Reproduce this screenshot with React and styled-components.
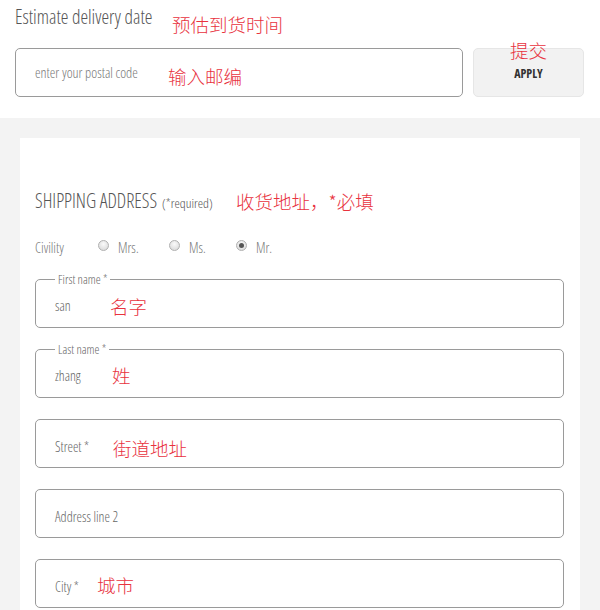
import styled, { createGlobalStyle } from "styled-components";

const GlobalStyle = createGlobalStyle`
  body {
    margin: 0;
    background: #ffffff;
    font-family: "Open Sans", "Lato", sans-serif;
    font-stretch: 80%;
    font-weight: 300;
  }
`;

const Page = styled.div`
  width: 600px;
  height: 610px;
  overflow: hidden;
  display: flex;
  flex-direction: column;
`;

const DeliverySection = styled.div`
  padding: 5px 16px 21px 15px;
  background: #fff;
`;

const Heading = styled.div`
  display: flex;
  align-items: flex-start;
  font-size: 19.3px;
  color: #555;
  line-height: 24px;
  height: 43px;
`;

const Slot = styled.span`
  flex: none;
  width: ${({ $w }) => $w}px;
  margin-top: ${({ $top }) => $top || 0}px;
  white-space: nowrap;
`;

const Note = styled.span`
  font-family: "Noto Sans CJK SC", sans-serif;
  font-stretch: normal;
  font-weight: 300;
  font-size: 18.5px;
  line-height: 24px;
  color: #e8323e;
  white-space: nowrap;
  margin-top: ${({ $top }) => $top || 0}px;
`;

const PostalRow = styled.div`
  display: flex;
  gap: 10px;
`;

const PostalInput = styled.div`
  flex: 1;
  height: 49px;
  box-sizing: border-box;
  border: 1px solid #9a9a9a;
  border-radius: 5px;
  display: flex;
  align-items: center;
  padding: 0 19px;
  font-size: 14.1px;
  color: #777;
`;

const ApplyButton = styled.div`
  position: relative;
  width: 111px;
  height: 49px;
  box-sizing: border-box;
  background: #f2f2f2;
  border: 1px solid #e6e6e6;
  border-radius: 5px;
  display: flex;
  align-items: center;
  justify-content: center;
  font-size: 12px;
  font-weight: 700;
  color: #333;
  padding-top: 1px;
`;

const ApplyNote = styled(Note)`
  position: absolute;
  top: -11px;
  left: 36px;
`;

const GreyArea = styled.div`
  flex: 1;
  background: #f3f3f3;
  padding: 20px 20px 0;
  display: flex;
`;

const Card = styled.div`
  flex: 1;
  background: #fff;
  padding: 47px 16px 0 15px;
`;

const SectionTitle = styled.div`
  display: flex;
  align-items: center;
  height: 30px;
  color: #555;
`;

const TitleText = styled.span`
  flex: none;
  width: 201px;
  white-space: nowrap;
  display: flex;
  align-items: baseline;
`;

const TitleMain = styled.span`
  font-size: 19.2px;
`;

const TitleSub = styled.span`
  font-size: 13.5px;
  margin-left: 5px;
`;

const CivilityRow = styled.div`
  display: flex;
  align-items: center;
  margin-top: 22px;
  height: 20px;
  font-size: 14px;
  color: #777;
`;

const CivilityLabel = styled.span`
  width: 63px;
`;

const RadioOption = styled.label`
  display: flex;
  align-items: center;
  gap: 9px;
  width: ${({ $w }) => ($w ? `${$w}px` : "auto")};
`;

const RadioDot = styled.span`
  width: 11px;
  height: 11px;
  box-sizing: border-box;
  border-radius: 50%;
  border: 1px solid #b0b0b0;
  background: radial-gradient(circle at 50% 35%, #fafafa, #d4d4d4);
  display: flex;
  align-items: center;
  justify-content: center;
  margin-top: -3px;

  &::after {
    content: "";
    width: 5px;
    height: 5px;
    border-radius: 50%;
    background: ${({ $checked }) => ($checked ? "#555" : "transparent")};
  }
`;

const Fields = styled.div`
  display: flex;
  flex-direction: column;
  gap: 21px;
  margin-top: 22px;
`;

const Field = styled.div`
  position: relative;
  height: 49px;
  box-sizing: border-box;
  border: 1px solid #9a9a9a;
  border-radius: 5px;
  padding: 0 19px;
  display: flex;
  align-items: center;
  font-size: 13.8px;
  color: #666;
`;

const FloatLabel = styled.span`
  position: absolute;
  top: -6px;
  left: 19px;
  padding: 0 3px;
  background: #fff;
  font-size: 12.5px;
  line-height: 12px;
  color: #666;
`;

const fields = [
  { label: "First name *", value: "san", note: "名字", w: 55, top: 3, noteTop: 5 },
  { label: "Last name *", value: "zhang", note: "姓", w: 57, top: 3, noteTop: 3 },
  { value: "Street *", note: "街道地址", w: 58, top: 5, noteTop: 9 },
  { value: "Address line 2", w: 120, top: 5 },
  { value: "City *", note: "城市", w: 42, top: 5, noteTop: 2 },
];

const App = () => {
  return (
    <Page>
      <GlobalStyle />
      <DeliverySection>
        <Heading>
          <Slot $w={157}>Estimate delivery date</Slot>
          <Note $top={7}>预估到货时间</Note>
        </Heading>
        <PostalRow>
          <PostalInput>
            <Slot $w={133}>enter your postal code</Slot>
            <Note $top={6}>输入邮编</Note>
          </PostalInput>
          <ApplyButton>
            <ApplyNote>提交</ApplyNote>
            APPLY
          </ApplyButton>
        </PostalRow>
      </DeliverySection>
      <GreyArea>
        <Card>
          <SectionTitle>
            <TitleText>
              <TitleMain>SHIPPING ADDRESS</TitleMain>
              <TitleSub>(*required)</TitleSub>
            </TitleText>
            <Note $top={2}>收货地址，*必填</Note>
          </SectionTitle>
          <CivilityRow>
            <CivilityLabel>Civility</CivilityLabel>
            <RadioOption $w={71}>
              <RadioDot />
              Mrs.
            </RadioOption>
            <RadioOption $w={67}>
              <RadioDot />
              Ms.
            </RadioOption>
            <RadioOption>
              <RadioDot $checked />
              Mr.
            </RadioOption>
          </CivilityRow>
          <Fields>
            {fields.map((f) => (
              <Field key={f.value}>
                {f.label && <FloatLabel>{f.label}</FloatLabel>}
                <Slot $w={f.w} $top={f.top}>
                  {f.value}
                </Slot>
                {f.note && <Note $top={f.noteTop}>{f.note}</Note>}
              </Field>
            ))}
          </Fields>
        </Card>
      </GreyArea>
    </Page>
  );
};

export default App;
